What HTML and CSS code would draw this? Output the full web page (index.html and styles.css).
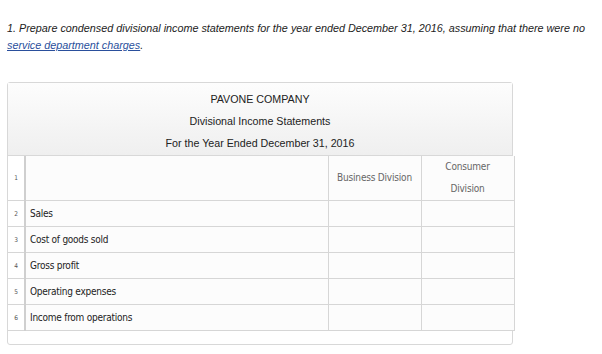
FILE: index.html
```html
<!DOCTYPE html>
<html lang="en">
<head>
<meta charset="UTF-8">
<meta name="viewport" content="width=device-width, initial-scale=1.0">
<title>Divisional Income Statements</title>

<link rel="stylesheet" href="styles.css">
</head>

<body>

<p class="question">
1. Prepare condensed divisional income statements for the year ended December 31, 2016, assuming that there were no
<a href="#">service department charges</a>.
</p>

<div class="sheet">

<div class="sheet-head">
<div>PAVONE COMPANY</div>
<div>Divisional Income Statements</div>
<div>For the Year Ended December 31, 2016</div>
</div>

<table class="grid">
<colgroup>
<col class="c-num">
<col class="c-label">
<col class="c-val">
<col class="c-val">
</colgroup>
<tr class="head-row">
<td class="num">1</td>
<td></td>
<td class="colhead">Business Division</td>
<td class="colhead">Consumer<br>Division</td>
</tr>
<tr>
<td class="num">2</td>
<td>Sales</td>
<td></td>
<td></td>
</tr>
<tr>
<td class="num">3</td>
<td>Cost of goods sold</td>
<td></td>
<td></td>
</tr>
<tr>
<td class="num">4</td>
<td>Gross profit</td>
<td></td>
<td></td>
</tr>
<tr>
<td class="num">5</td>
<td>Operating expenses</td>
<td></td>
<td></td>
</tr>
<tr>
<td class="num">6</td>
<td>Income from operations</td>
<td></td>
<td></td>
</tr>
</table>

</div>

</body>
</html>
```

FILE: styles.css
```css
body{
    margin:0;
    padding:0 7px;
    font-family:"Liberation Sans",Arial,sans-serif;
    background:white;
    color:#222;
}

.question{
    margin:20px 0 0;
    font-size:10.8px;
    line-height:17px;
    font-style:italic;
}

.question a{
    color:#2a4f9c;
}

.sheet{
    width:504px;
    margin-top:28px;
    border:1px solid #d8d8d8;
    border-radius:3px;
    padding-bottom:13px;
}

.sheet-head{
    padding:5px 0 1px;
    text-align:center;
    font-size:10.7px;
    line-height:22px;
    color:#222;
    background:linear-gradient(#fdfdfd,#efefef);
    border-bottom:1px solid #d8d8d8;
}

.grid{
    width:506px;
    border-collapse:collapse;
    table-layout:fixed;
    font-family:"Liberation Sans Narrow","DejaVu Sans Condensed",sans-serif;
    font-size:10px;
    letter-spacing:-0.25px;
    color:#222;
    background:#fcfcfc;
}

.c-num{ width:17px; }
.c-label{ width:303px; }
.c-val{ width:93px; }

.grid td{
    height:25px;
    padding:0 0 0 4px;
    border:1px solid #d6d6d6;
    border-top:none;
}

.grid td:first-child{
    border-left:none;
}

.grid td.num{
    padding:0;
    text-align:center;
    font-size:6.5px;
    letter-spacing:0;
    color:#555;
    background:white;
    border-right:2px solid #cfcfcf;
}

.head-row td{
    height:43px;
}

.grid td.colhead{
    padding:0;
    text-align:center;
    color:#666;
    font-size:10px;
    letter-spacing:-0.2px;
    line-height:22px;
}
```
